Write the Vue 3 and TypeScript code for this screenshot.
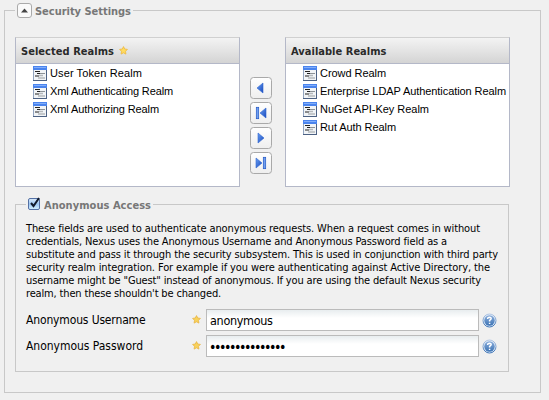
<script setup lang="ts">
import { ref } from 'vue'

interface Line { text: string; width: number }
interface Realm { name: string; width: number }

const selected: Realm[] = [
  { name: 'User Token Realm', width: 92 },
  { name: 'Xml Authenticating Realm', width: 123 },
  { name: 'Xml Authorizing Realm', width: 109 },
]
const available: Realm[] = [
  { name: 'Crowd Realm', width: 66 },
  { name: 'Enterprise LDAP Authentication Realm', width: 186 },
  { name: 'NuGet API-Key Realm', width: 109 },
  { name: 'Rut Auth Realm', width: 76 },
]
const lists = [
  { title: 'Selected Realms', required: true, realms: selected },
  { title: 'Available Realms', required: false, realms: available },
]
const moves = [
  { label: 'Add', points: '13,6 13,16 7,11', bar: -1 },
  { label: 'Add all', points: '16,6 16,16 10,11', bar: 6 },
  { label: 'Remove', points: '8,6 8,16 14,11', bar: -1 },
  { label: 'Remove all', points: '6,6 6,16 12,11', bar: 13 },
]
const lines: Line[] = [
  { text: 'These fields are used to authenticate anonymous requests. When a request comes in without', width: 454 },
  { text: 'credentials, Nexus uses the Anonymous Username and Anonymous Password field as a', width: 421 },
  { text: 'substitute and pass it through the security subsystem. This is used in conjunction with third party', width: 472 },
  { text: 'security realm integration. For example if you were authenticating against Active Directory, the', width: 464 },
  { text: 'username might be "Guest" instead of anonymous. If you are using the default Nexus security', width: 455 },
  { text: "realm, then these shouldn't be changed.", width: 195 },
]
const username = ref('anonymous')
const password = ref('•••••••••••••••')

// Spreads the leftover width of a text over its letters.
const vFit = {
  mounted(el: HTMLElement, binding: { value: number }) {
    const natural = el.getBoundingClientRect().width
    const count = (el.textContent ?? '').length
    el.style.letterSpacing = `${(binding.value - natural) / count}px`
  },
}
</script>

<template>
  <fieldset class="panel">
    <legend class="legend">
      <svg class="toggle" width="15" height="15" viewBox="0 0 15 15">
        <rect x=".5" y=".5" width="14" height="14" rx="2.5" fill="#fafafa" stroke="#aaa" />
        <path d="M4 9.500 7.500 5.500 11 9.500z" fill="#444" />
      </svg>
      <b v-fit="96">Security Settings</b>
    </legend>

    <div class="transfer">
      <template v-for="(list, i) in lists" :key="list.title">
        <section class="list">
          <header class="list-head">
            <b v-fit="list.required ? 93 : 95.5">{{ list.title }}</b>
            <svg v-if="list.required" class="star" width="9" height="9" viewBox="0 0 9 9">
              <path d="M4.5.6 5.7 3 8.4 3.4 6.5 5.3 6.9 8.1 4.5 6.8 2.1 8.1 2.5 5.3.6 3.4 3.3 3z" fill="#ffdc60" stroke="#edb83c" stroke-width=".8" />
            </svg>
          </header>
          <ul class="realms">
            <li v-for="realm in list.realms" :key="realm.name">
              <svg width="14" height="15" viewBox="0 0 14 15">
                <rect width="14" height="15" fill="#93a5c0" />
                <rect width="14" height="4" fill="#4a84ee" />
                <rect x="1" y="1" width="12" height="1" fill="#82aefa" />
                <rect x="1" y="4" width="12" height="10" fill="#f1f4f7" />
                <path d="M2 5.500h5M4 7.500h3M2 10h4" stroke="#222" />
                <path d="M7 7.500h5" stroke="#8c9297" />
                <path d="M6 9.500h4M5 12h7" stroke="#b5b9bd" stroke-width="1.500" />
                <path d="M13.500 4v11M0 14.500h14" stroke="#4c6183" />
              </svg>
              <span v-fit="realm.width">{{ realm.name }}</span>
            </li>
          </ul>
        </section>
        <div v-if="i === 0" class="moves">
          <button v-for="move in moves" :key="move.label" type="button" :aria-label="move.label">
            <svg width="22" height="22" viewBox="0 0 22 22">
              <defs>
                <linearGradient id="face" x1="0" y1="0" x2="0" y2="1">
                  <stop offset="0" stop-color="#fff" /><stop offset="1" stop-color="#eee" />
                </linearGradient>
                <linearGradient id="arrow" x1="0" y1="0" x2="1" y2="1">
                  <stop offset="0" stop-color="#6ba0f2" /><stop offset="1" stop-color="#1748bd" />
                </linearGradient>
              </defs>
              <rect x=".5" y=".5" width="21" height="21" rx="3" fill="url(#face)" stroke="#a9a9a9" />
              <polygon :points="move.points" fill="url(#arrow)" stroke="#2f66d0" stroke-width=".6" />
              <rect v-if="move.bar > 0" :x="move.bar + .3" y="5.300" width="2.400" height="11.400" fill="#70a0f0" stroke="#2257c5" stroke-width=".7" />
            </svg>
          </button>
        </div>
      </template>
    </div>

    <fieldset class="access">
      <legend class="legend">
        <svg class="check" width="13" height="14" viewBox="0 0 13 14">
          <defs>
            <linearGradient id="box" x1="0" y1="0" x2="0" y2="1">
              <stop offset="0" stop-color="#dcebfa" /><stop offset=".5" stop-color="#9cc6f2" /><stop offset="1" stop-color="#d4f0ff" />
            </linearGradient>
          </defs>
          <rect x=".5" y="1.500" width="11" height="11" rx="1.500" fill="url(#box)" stroke="#5470a4" />
          <path d="M3 6 5.500 9 11 1" fill="none" stroke="#111a2c" stroke-width="2" />
        </svg>
        <b v-fit="107">Anonymous Access</b>
      </legend>
      <p class="note">
        <span v-for="line in lines" :key="line.text" class="note-line"><span v-fit="line.width">{{ line.text }}</span></span>
      </p>
      <div v-for="(label, i) in ['Anonymous Username', 'Anonymous Password']" :key="label" class="row">
        <label :for="`field-${i}`"><span v-fit="i === 0 ? 119.5 : 117">{{ label }}</span></label>
        <svg class="star" width="9" height="9" viewBox="0 0 9 9">
          <path d="M4.5.6 5.7 3 8.4 3.4 6.5 5.3 6.9 8.1 4.5 6.8 2.1 8.1 2.5 5.3.6 3.4 3.3 3z" fill="#f8d25c" stroke="#e8b440" stroke-width=".8" />
        </svg>
        <input v-if="i === 0" id="field-0" v-model="username" type="text" />
        <input v-else id="field-1" v-model="password" class="secret" type="text" />
        <svg class="help" width="15" height="15" viewBox="0 0 15 15">
          <defs>
            <linearGradient id="disc" x1="0" y1="0" x2="0" y2="1">
              <stop offset="0" stop-color="#8aaddb" /><stop offset="1" stop-color="#3d74b5" />
            </linearGradient>
            <linearGradient id="rim" x1="0" y1="0" x2="0" y2="1">
              <stop offset="0" stop-color="#b5c9e5" /><stop offset="1" stop-color="#3c73b6" />
            </linearGradient>
          </defs>
          <circle cx="7.500" cy="7.500" r="6.500" fill="#e1ebf7" stroke="url(#rim)" />
          <circle cx="7.500" cy="7.500" r="5.200" fill="url(#disc)" />
          <path d="M5.700 6V5.200Q5.900 4.200 7.500 4.200 9.200 4.300 9.200 5.600 9.200 6.400 7.600 7.400V8.500M7.600 9.700V11" fill="none" stroke="#fff" stroke-width="1.500" />
        </svg>
      </div>
    </fieldset>
  </fieldset>
</template>

<style>
body { background: #f0f0f0; }
</style>

<style scoped>
.panel, .access { box-sizing: border-box; min-width: 0; border: 1px solid #c8c8c8; padding: 0 10px; }
.panel {
  width: 537px; height: 390px; margin: 3px 0 0 4px;
  font: 12px/13px "DejaVu Sans Condensed", "DejaVu Sans", sans-serif;
  font-stretch: condensed; color: #000;
}
.legend { display: flex; align-items: center; box-sizing: border-box; height: 15px; width: 118px; padding: 1px 2px 0; color: #777; white-space: nowrap; }
.legend b, .list-head b { font: bold 11px/13px "DejaVu Sans Condensed", "DejaVu Sans", sans-serif; font-stretch: condensed; }
.toggle { flex: none; margin: -1px 3px 0 0; }
.transfer { display: flex; margin-top: 19px; }
.list { box-sizing: border-box; flex: none; width: 225px; height: 150px; border: 1px solid #b4b8c8; border-top-color: #d0d0d0; background: #fff; }
.list-head { display: flex; align-items: center; box-sizing: border-box; height: 26px; padding: 2px 0 0 5px; border-bottom: 1px solid #b4b8c8; background: linear-gradient(#f3f3f3, #e4e4e4 50%, #d4d4d4); color: #2a2a2a; white-space: nowrap; }
.list-head .star { margin: -2px 0 0 5px; }
.realms { list-style: none; margin: 0; padding: 0 0 0 17px; font: 11px/18px "Liberation Sans", Arial, sans-serif; color: #000; }
.realms li { display: flex; align-items: center; height: 18px; white-space: nowrap; }
.realms svg { flex: none; margin: 1px 3px 0 0; }
.moves { display: flex; flex-direction: column; gap: 3px; width: 45px; box-sizing: border-box; padding: 40px 0 0 10px; }
.moves button { width: 22px; height: 22px; border: 0; padding: 0; background: none; }
.moves svg { display: block; }
.access { width: 494px; height: 175px; margin: 10px 0 0; }
.access .legend { width: 127px; }
.check { flex: none; margin: -2px 3px 0 0; }
.note { margin: 10px 0 9px; font-size: 11px; }
.note-line { display: block; height: 13px; white-space: nowrap; }
.row { display: flex; align-items: center; height: 22px; margin-bottom: 4px; }
label { width: 166px; white-space: nowrap; }
.row .star { margin: -2px 5px 0 0; }
input { box-sizing: border-box; width: 273px; height: 22px; margin: 0; border: 1px solid #bbb; border-radius: 0; padding: 1px 3px 0; background: linear-gradient(#e8edef, #fff 8px); font: 12.5px "DejaVu Sans Condensed", "DejaVu Sans", sans-serif; font-stretch: condensed; letter-spacing: -.32px; outline: 0; }
.secret { padding-left: 2px; font-size: 14px; letter-spacing: -2.430px; }
.help { margin-left: 3px; }
</style>
